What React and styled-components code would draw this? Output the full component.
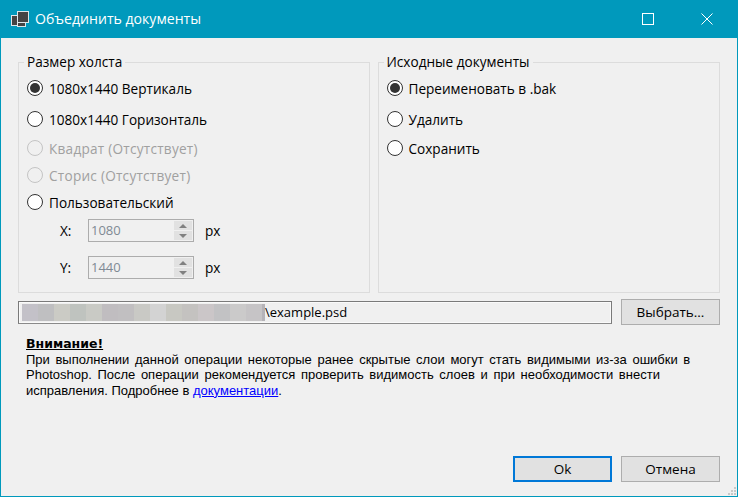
import React from "react";
import styled, { createGlobalStyle } from "styled-components";

const GlobalStyle = createGlobalStyle`
html, body {
  margin: 0;
  padding: 0;
  background: #f0f0f0;
}
`;

const fontStack = `"Open Sans", "Noto Sans", sans-serif`;
const tightStack = `"Liberation Sans", Arial, sans-serif`;

const Window = styled.div`
  position: relative;
  box-sizing: border-box;
  width: 738px;
  height: 497px;
  display: flex;
  flex-direction: column;
  background: #f0f0f0;
  border: 1px solid #0099bc;
  border-top: none;
  font-family: ${fontStack};
  font-size: 13.6px;
  color: #000;
  overflow: hidden;
`;

const TitleBar = styled.div`
  height: 38px;
  flex: none;
  display: flex;
  align-items: center;
  background: #0099bc;
  color: #fff;
  padding-left: 9px;
`;

const TitleText = styled.span`
  margin-left: 5px;
  font-size: 14.1px;
  flex: 1;
  padding-bottom: 1px;
`;

const WinButton = styled.div`
  width: 46px;
  height: 38px;
  display: flex;
  align-items: center;
  justify-content: center;
  margin-right: ${(p) => p.$gap || 0}px;
`;

const Content = styled.div`
  flex: 1;
  display: flex;
  flex-direction: column;
  padding: 15px 17px 14px 17px;
`;

const Groups = styled.div`
  display: flex;
  gap: 8px;
  height: 240px;
`;

const Group = styled.fieldset`
  margin: 0;
  box-sizing: border-box;
  width: ${(p) => p.$width}px;
  height: 240px;
  border: 1px solid #dcdcdc;
  padding: 0 8px;
  display: block;
`;

const Legend = styled.legend`
  padding: 0 3px;
  margin-left: -3px;
  line-height: 18px;
`;

const Options = styled.div`
  display: flex;
  flex-direction: column;
  padding-top: 9px;
`;

const OptionRow = styled.label`
  height: 16px;
  margin-top: ${(p) => p.$top || 0}px;
  display: flex;
  align-items: center;
  gap: 6px;
  color: ${(p) => (p.$disabled ? "#a0a0a0" : "#000")};
  letter-spacing: ${(p) => (p.$disabled ? "0.25px" : "0")};
`;

const RadioMark = styled.span`
  box-sizing: border-box;
  width: 16px;
  height: 16px;
  flex: none;
  border-radius: 50%;
  border: 1px solid ${(p) => (p.$disabled ? "#c4c4c4" : "#333")};
  background: ${(p) => (p.$disabled ? "#f0f0f0" : "#fff")};
  display: flex;
  align-items: center;
  justify-content: center;

  &::after {
    content: "";
    width: 10px;
    height: 10px;
    border-radius: 50%;
    background: #333;
    display: ${(p) => (p.$checked ? "block" : "none")};
  }
`;

const SizeRow = styled.div`
  display: flex;
  align-items: center;
  height: 23px;
  margin-top: ${(p) => p.$top}px;
  padding-left: 33px;
`;

const AxisLabel = styled.span`
  width: 28px;
`;

const Spin = styled.div`
  box-sizing: border-box;
  width: 106px;
  height: 23px;
  border: 1px solid #acacac;
  display: flex;
  align-items: center;
  justify-content: space-between;
  padding: 1px 1px 1px 2px;
  color: #7f8a94;
  font-size: 13px;
`;

const SpinValue = styled.span`
  padding-bottom: 2px;
`;

const SpinButtons = styled.div`
  display: flex;
  flex-direction: column;
  gap: 1px;
  width: 18px;
`;

const SpinButton = styled.div`
  height: 9px;
  background: #e1e1e1;
  display: flex;
  align-items: center;
  justify-content: center;
`;

const Unit = styled.span`
  margin-left: 11px;
`;

const PathRow = styled.div`
  display: flex;
  align-items: center;
  gap: 9px;
  margin-top: 6px;
`;

const PathBox = styled.div`
  box-sizing: border-box;
  width: 594px;
  height: 23px;
  border: 1px solid #7a7a7a;
  background: #f0f0f0;
  border-bottom-color: #8a8a8a;
  box-shadow: inset 0 0 0 1px #fafafa;
  display: flex;
  align-items: center;
  padding-left: 3px;
  font-size: 13px;
`;

const Mosaic = styled.div`
  display: flex;
  height: 17px;
`;

const MosaicCell = styled.span`
  width: ${(p) => p.$w || 16}px;
  height: 17px;
`;

const Button = styled.button`
  box-sizing: border-box;
  width: 99px;
  height: 26px;
  padding: 0;
  background: #e1e1e1;
  border: ${(p) => (p.$primary ? "2px solid #0078d7" : "1px solid #adadad")};
  font-family: ${fontStack};
  font-size: 13.5px;
  color: #000;
`;

const Notice = styled.div`
  margin-top: 11px;
  padding-left: 8px;
  font-family: ${tightStack};
  font-size: 13px;
  line-height: 15.4px;
`;

const NoticeTitle = styled.div`
  font-family: "DejaVu Sans", sans-serif;
  font-size: 12.5px;
  font-weight: bold;
  text-decoration: underline;
  line-height: 16px;
`;

const NoticeLine = styled.div`
  white-space: nowrap;
  word-spacing: ${(p) => p.$spacing || 0}px;
`;

const DocLink = styled.a`
  color: #0000ff;
  text-decoration: underline;
`;

const Footer = styled.div`
  margin-top: auto;
  display: flex;
  justify-content: flex-end;
  gap: 9px;
`;

const Grip = styled.svg`
  position: absolute;
  right: 1px;
  bottom: 1px;
`;

const mosaic = [
  "#c3c1c8", "#bfbfc1", "#cbcbc5", "#bfc3bf", "#c9cac5", "#c0bdc0", "#c1bfc1",
  "#c9c9c5", "#d3d3d3", "#c8c8c2", "#c4c2c0", "#cbc6c8", "#c2c2c4", "#cbcaca",
  "#c6c4c6",
];

const AppIcon = () => (
  <svg width="20" height="18" viewBox="0 0 20 18">
    <rect x="1.5" y="5.5" width="7" height="10" fill="#444" stroke="#dde6e9" />
    <rect x="7.5" y="1.5" width="11" height="11" fill="#444" stroke="#dde6e9" />
    <rect x="7.5" y="12.5" width="8" height="4" fill="#444" stroke="#dde6e9" />
  </svg>
);

const Option = ({ label, top, checked, disabled }) => (
  <OptionRow $top={top} $disabled={disabled}>
    <RadioMark $checked={checked} $disabled={disabled} />
    {label}
  </OptionRow>
);

const Arrow = ({ up }) => (
  <svg width="8" height="4" viewBox="0 0 8 4">
    <path d={up ? "M4 0L8 4H0z" : "M0 0h8L4 4z"} fill="#808080" />
  </svg>
);

const SizeField = ({ axis, value, top }) => (
  <SizeRow $top={top}>
    <AxisLabel>{axis}:</AxisLabel>
    <Spin>
      <SpinValue>{value}</SpinValue>
      <SpinButtons>
        <SpinButton><Arrow up /></SpinButton>
        <SpinButton><Arrow /></SpinButton>
      </SpinButtons>
    </Spin>
    <Unit>px</Unit>
  </SizeRow>
);

export default function App() {
  return (
    <>
      <GlobalStyle />
      <Window>
        <TitleBar>
          <AppIcon />
          <TitleText>Объединить документы</TitleText>
          <WinButton $gap={13}>
            <svg width="12" height="12" viewBox="0 0 12 12">
              <rect x="0.5" y="0.5" width="11" height="11" fill="none" stroke="#fff" />
            </svg>
          </WinButton>
          <WinButton $gap={7}>
            <svg width="12" height="12" viewBox="0 0 12 12">
              <path d="M0.5 0.5L11.5 11.5M11.5 0.5L0.5 11.5" fill="none" stroke="#fff" />
            </svg>
          </WinButton>
        </TitleBar>
        <Content>
          <Groups>
            <Group $width={352}>
              <Legend>Размер холста</Legend>
              <Options>
                <Option label="1080x1440 Вертикаль" checked />
                <Option label="1080x1440 Горизонталь" top={15} />
                <Option label="Квадрат (Отсутствует)" top={13} disabled />
                <Option label="Сторис (Отсутствует)" top={11} disabled />
                <Option label="Пользовательский" top={11} />
              </Options>
              <SizeField axis="X" value="1080" top={9} />
              <SizeField axis="Y" value="1440" top={14} />
            </Group>
            <Group $width={343}>
              <Legend>Исходные документы</Legend>
              <Options>
                <Option label="Переименовать в .bak" checked />
                <Option label="Удалить" top={15} />
                <Option label="Сохранить" top={13} />
              </Options>
            </Group>
          </Groups>
          <PathRow>
            <PathBox>
              <Mosaic>
                {mosaic.map((c, i) => (
                  <MosaicCell key={i} style={{ background: c }} />
                ))}
                <MosaicCell $w={3} style={{ background: "#b5b3b8" }} />
              </Mosaic>
              \example.psd
            </PathBox>
            <Button>Выбрать...</Button>
          </PathRow>
          <Notice>
            <NoticeTitle>Внимание!</NoticeTitle>
            <NoticeLine $spacing={2}>
              При выполнении данной операции некоторые ранее скрытые слои могут стать видимыми из-за ошибки в
            </NoticeLine>
            <NoticeLine $spacing={2}>
              Photoshop. После операции рекомендуется проверить видимость слоев и при необходимости внести
            </NoticeLine>
            <NoticeLine>
              исправления. Подробнее в <DocLink href="#">документации</DocLink>.
            </NoticeLine>
          </Notice>
          <Footer>
            <Button $primary>Ok</Button>
            <Button>Отмена</Button>
          </Footer>
        </Content>
        <Grip width="8" height="8" viewBox="0 0 8 8">
          <path d="M6 0h2v2H6zM3 3h2v2H3zM6 3h2v2H6zM0 6h2v2H0zM3 6h2v2H3zM6 6h2v2H6z" fill="#c8c8c8" />
        </Grip>
      </Window>
    </>
  );
}
